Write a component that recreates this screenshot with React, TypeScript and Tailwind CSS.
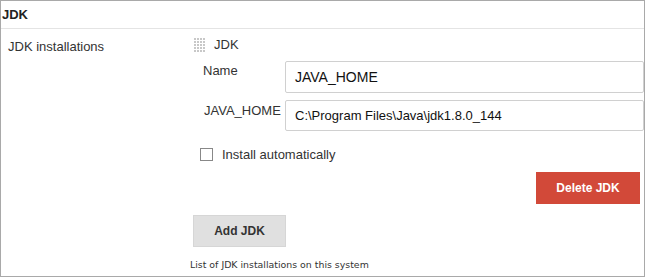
import React from "react";

function Grip() {
  return (
    <svg width="11" height="14" viewBox="0 0 11 14" className="block">
      {Array.from({ length: 5 }).map((_, r) =>
        Array.from({ length: 4 }).map((__, c) => (
          <rect key={`${r}-${c}`} x={c * 3} y={r * 3} width="2" height="2" fill="#c8c8c8" />
        ))
      )}
    </svg>
  );
}

export default function App() {
  return (
    <div className="w-[646px] h-[278px] bg-white overflow-hidden" style={{ fontFamily: '"Liberation Sans", Arial, sans-serif' }}>
      <div className="w-[645px] h-[277px] border border-[#a9a9a9] flex flex-col">
        <div className="h-[28px] border-b border-[#e4e4e4] flex items-center pl-[1px] text-[13px] font-bold text-[#222]">
          JDK
        </div>
        <div className="flex flex-1">
          <div className="w-[185px] pl-[7px] pt-[8px] text-[13px] text-[#333]">JDK installations</div>
          <div className="flex-1 flex flex-col pt-[9px]">
            <div className="flex items-center gap-[9px] pl-[8px] h-[14px] text-[13px] text-[#333]">
              <Grip />
              <span>JDK</span>
            </div>
            <div className="flex items-start mt-[9px] pl-[17px]">
              <div className="w-[82px] pt-[0px] text-[13px] text-[#333]">Name</div>
              <div className="flex-1 h-[32px] border border-[#d0d0d0] rounded-[2px] flex items-center pl-[9px] text-[14px] text-[#111]">
                JAVA_HOME
              </div>
            </div>
            <div className="flex items-start mt-[7px] pl-[18px]">
              <div className="w-[81px] pt-[1px] text-[13px] text-[#333]">JAVA_HOME</div>
              <div className="flex-1 h-[31px] border border-[#d0d0d0] rounded-[2px] flex items-center pl-[9px] text-[13px] text-[#111]">
                C:\Program Files\Java\jdk1.8.0_144
              </div>
            </div>
            <div className="flex items-center mt-[14px] pl-[14px] gap-[9px] text-[13px] text-[#333]">
              <div className="w-[13px] h-[13px] border border-[#888] bg-white" />
              <span>Install automatically</span>
            </div>
            <div className="flex justify-end pr-[4px] mt-[7px]">
              <div className="w-[104px] h-[32px] bg-[#d24939] text-white text-[12px] font-bold flex items-center justify-center">
                Delete JDK
              </div>
            </div>
            <div className="mt-[11px] pl-[7px]">
              <div className="w-[93px] h-[32px] bg-[#e0e0e0] border border-[#d6d6d6] text-[#333] text-[12px] font-bold flex items-center justify-center">
                Add JDK
              </div>
            </div>
            <div className="mt-[11px] pl-[4px] text-[9.4px] text-[#333]" style={{ fontFamily: '"DejaVu Sans", Verdana, sans-serif' }}>
              List of JDK installations on this system
            </div>
          </div>
        </div>
      </div>
    </div>
  );
}
